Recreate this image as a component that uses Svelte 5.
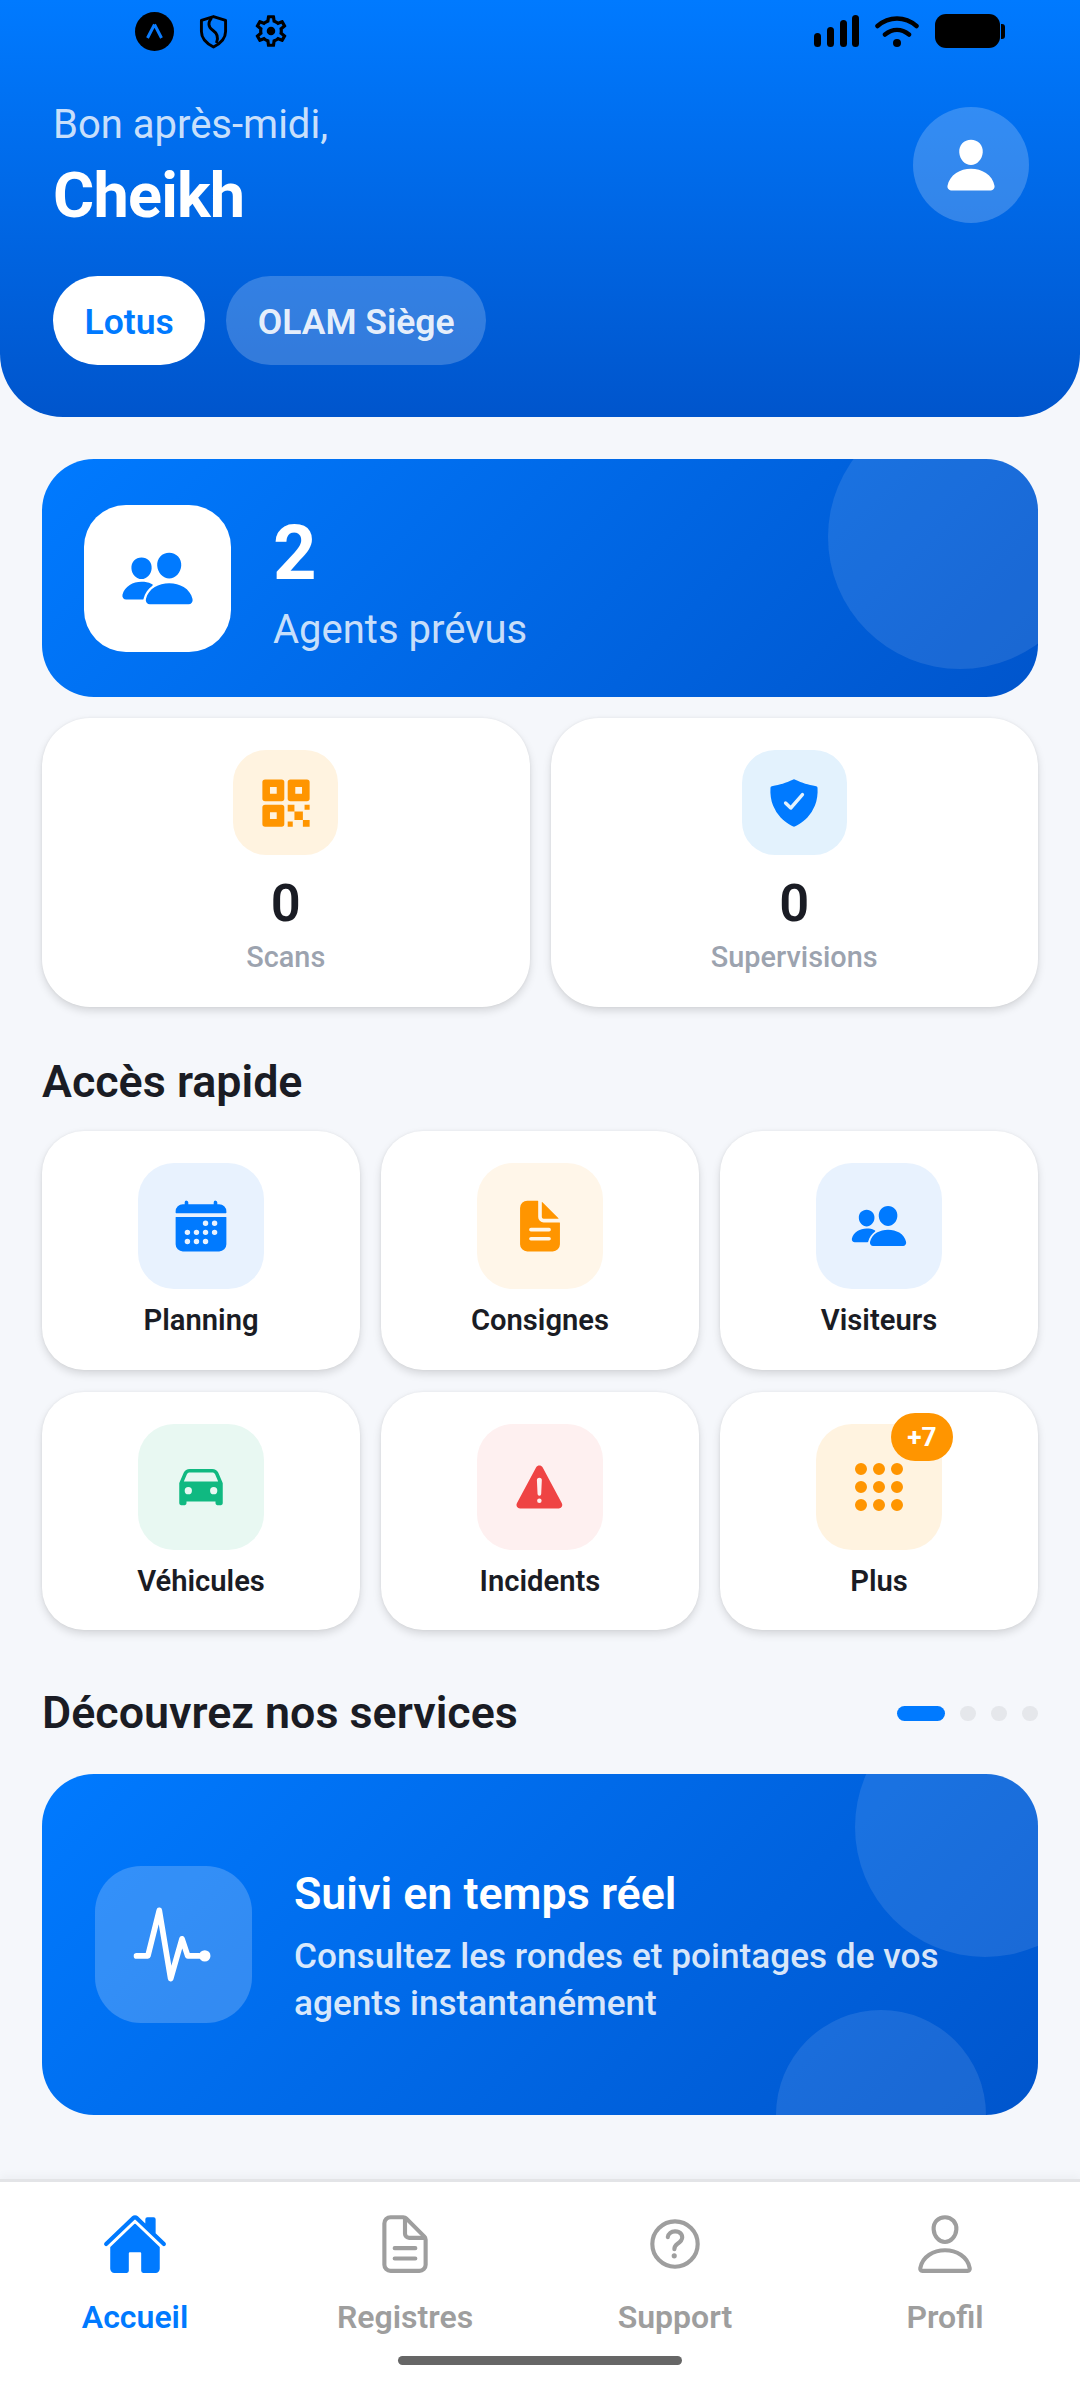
<script>
  const P = {
    person: 'M332.64 64.58C313.18 43.57 286 32 256 32c-30.16 0-57.43 11.5-76.8 32.38-19.58 21.11-29.12 49.8-26.88 80.78C156.76 206.28 203.27 256 256 256s99.16-49.71 103.67-110.82c2.27-30.7-7.33-59.33-27.03-80.6zM432 480H80a31 31 0 01-24.2-11.13c-6.5-7.77-9.12-18.38-7.18-29.11C57.06 392.94 83.4 353.61 124.8 326c36.78-24.51 83.37-38 131.2-38s94.42 13.5 131.2 38c41.4 27.6 67.74 66.93 76.18 113.75 1.94 10.73-.68 21.34-7.18 29.11A31 31 0 01432 480z',
    people: 'M336 256c-20.56 0-40.44-9.18-56-25.84-15.13-16.25-24.37-37.92-26-61-1.74-24.62 5.77-47.26 21.14-63.76S312 80 336 80c23.83 0 45.38 9.06 60.7 25.52 15.47 16.62 23 39.22 21.26 63.63-1.67 23.11-10.9 44.77-26 61C376.44 246.82 356.57 256 336 256zM467.83 432H204.18a27.71 27.71 0 01-22-10.67 30.22 30.22 0 01-5.26-25.79c8.42-33.81 29.28-61.85 60.32-81.08C264.79 297.4 299.86 288 336 288c36.85 0 71 9 98.71 26.05 31.11 19.13 52 47.33 60.38 81.55a30.27 30.27 0 01-5.32 25.78A27.68 27.68 0 01467.83 432zM147 260c-35.19 0-66.13-32.72-69-72.93-1.42-20.6 5-39.65 18-53.62 12.86-13.83 31-21.45 51-21.45s38 7.66 50.93 21.57c13.1 14.08 19.5 33.09 18 53.52-2.87 40.2-33.8 72.91-68.93 72.91zM212.66 291.45c-17.59-8.6-40.42-12.9-65.65-12.9-29.46 0-58.07 7.68-80.57 21.62-25.51 15.83-42.67 38.88-49.6 66.71a27.39 27.39 0 005.36 23.73A25.32 25.32 0 0042.46 400h111a8 8 0 007.87-6.57c.11-.63.25-1.26.41-1.88 8.48-34.06 28.35-62.84 57.71-83.82a8 8 0 00-.63-13.39c-1.57-.92-3.37-1.89-6.16-2.89z',
    calendar: 'M480 128a64 64 0 00-64-64h-16V48.45c0-8.61-6.62-16-15.23-16.43A16 16 0 00368 48v16H144V48.45c0-8.61-6.62-16-15.23-16.43A16 16 0 00112 48v16H96a64 64 0 00-64 64v12a4 4 0 004 4h440a4 4 0 004-4zM32 416a64 64 0 0064 64h320a64 64 0 0064-64V179a3 3 0 00-3-3H35a3 3 0 00-3 3zm344-208a24 24 0 11-24 24 24 24 0 0124-24zm0 80a24 24 0 11-24 24 24 24 0 0124-24zm-80-80a24 24 0 11-24 24 24 24 0 0124-24zm0 80a24 24 0 11-24 24 24 24 0 0124-24zm0 80a24 24 0 11-24 24 24 24 0 0124-24zm-80-80a24 24 0 11-24 24 24 24 0 0124-24zm0 80a24 24 0 11-24 24 24 24 0 0124-24zm-80-80a24 24 0 11-24 24 24 24 0 0124-24zm0 80a24 24 0 11-24 24 24 24 0 0124-24z',
    doc: 'M428 224H288a48 48 0 01-48-48V36a4 4 0 00-4-4h-92a64 64 0 00-64 64v320a64 64 0 0064 64h224a64 64 0 0064-64V228a4 4 0 00-4-4zm-92 160H176a16 16 0 010-32h160a16 16 0 010 32zm0-80H176a16 16 0 010-32h160a16 16 0 010 32zM419.22 188.59L275.41 44.78a2 2 0 00-3.41 1.41V176a16 16 0 0016 16h129.81a2 2 0 001.41-3.41z',
    car: 'M447.68 220.78a16 16 0 00-1-3.08l-37.78-88.16C400.19 109.17 379 96 354.89 96H157.11c-24.09 0-45.3 13.17-54 33.54L65.29 217.7A15.72 15.72 0 0064 224v176a16 16 0 0016 16h32a16 16 0 0016-16v-16h256v16a16 16 0 0016 16h32a16 16 0 0016-16V224a16.15 16.15 0 00-.32-3.22zM144 320a32 32 0 1132-32 32 32 0 01-32 32zm224 0a32 32 0 1132-32 32 32 0 01-32 32zM104.26 208l28.23-65.85C136.11 133.69 146 128 157.11 128h197.78c11.1 0 21 5.69 24.62 14.15L407.74 208z',
    warning: 'M449.07 399.08L278.64 82.58c-12.08-22.44-44.26-22.44-56.35 0L51.87 399.08A32 32 0 0080 446.25h340.89a32 32 0 0028.18-47.17zm-198.6-1.83a20 20 0 1120-20 20 20 0 01-20 20zm21.72-201.15l-5.74 122a16 16 0 01-32 0l-5.74-121.95a21.73 21.73 0 0121.5-22.69h.21a21.74 21.74 0 0121.73 22.7z',
    shield: 'M479.07 111.36a16 16 0 00-13.15-14.74c-86.5-15.52-122.61-26.74-203.33-63.2a16 16 0 00-13.18 0C168.69 69.88 132.58 81.1 46.08 96.62a16 16 0 00-13.15 14.74c-3.85 61.11 4.36 118.05 24.43 169.24A349.47 349.47 0 00129 393.11c53.47 56.73 110.24 81.37 121.07 85.73a16 16 0 0012 0c10.83-4.36 67.6-29 121.07-85.73a349.47 349.47 0 0071.5-112.51c20.07-51.19 28.28-108.13 24.43-169.24zm-131 75.11l-110.8 128a16 16 0 01-11.41 5.53h-.66a16 16 0 01-11.2-4.57l-49.2-48.2a16 16 0 1122.4-22.86l37 36.29 99.7-115.13a16 16 0 0124.2 20.94z',
    qr: 'M58 32H214a26 26 0 0126 26V214a26 26 0 01-26 26H58a26 26 0 01-26-26V58a26 26 0 0126-26zM104 104v64h64v-64zM298 32H454a26 26 0 0126 26V214a26 26 0 01-26 26H298a26 26 0 01-26-26V58a26 26 0 0126-26zM344 104v64h64v-64zM58 272H214a26 26 0 0126 26V454a26 26 0 01-26 26H58a26 26 0 01-26-26V298a26 26 0 0126-26zM104 344v64h64v-64zM272 272h64v64h-64zM336 336h80v80h-80zM416 416h64v64h-64zM432 272h48v48h-48zM272 432h48v48h-48z',
    keypad: 'M64 112a48 48 0 1096 0 48 48 0 10-96 0zM208 112a48 48 0 1096 0 48 48 0 10-96 0zM352 112a48 48 0 1096 0 48 48 0 10-96 0zM64 256a48 48 0 1096 0 48 48 0 10-96 0zM208 256a48 48 0 1096 0 48 48 0 10-96 0zM352 256a48 48 0 1096 0 48 48 0 10-96 0zM64 400a48 48 0 1096 0 48 48 0 10-96 0zM208 400a48 48 0 1096 0 48 48 0 10-96 0zM352 400a48 48 0 1096 0 48 48 0 10-96 0z',
    home: 'M261.56 101.28a8 8 0 00-11.06 0L66.4 277.15a8 8 0 00-2.47 5.79L63.9 448a32 32 0 0032 32H192a16 16 0 0016-16V328a8 8 0 018-8h80a8 8 0 018 8v136a16 16 0 0016 16h96.06a32 32 0 0032-32V282.94a8 8 0 00-2.47-5.79zM490.91 244.15l-74.8-71.56V64a16 16 0 00-16-16h-48a16 16 0 00-16 16v32l-57.92-55.38C272.77 35.14 264.71 32 256 32c-8.68 0-16.72 3.14-22.14 8.63l-212.7 203.5c-6.22 6-7 15.87-1.34 22.37A16 16 0 0043 267.56L250.5 69.28a8 8 0 0111.06 0l207.52 198.28a16 16 0 0022.59-.44c6.14-6.36 5.63-16.86-.76-22.97z'
  };
  const quick = [
    { label: 'Planning', icon: 'calendar', tone: 'blue' },
    { label: 'Consignes', icon: 'doc', tone: 'cream' },
    { label: 'Visiteurs', icon: 'people', tone: 'blue' },
    { label: 'Véhicules', icon: 'car', tone: 'green' },
    { label: 'Incidents', icon: 'warning', tone: 'red' },
    { label: 'Plus', icon: 'keypad', tone: 'orange', badge: '+7' }
  ];
</script>

{#snippet glyph(name, cls)}
  <svg class={cls} viewBox="0 0 512 512" aria-hidden="true"><path fill-rule="evenodd" d={P[name]} /></svg>
{/snippet}

<div class="page">
  <header class="hero">
    <div class="status">
      <div class="status-left">
        <svg class="s-expo" viewBox="0 0 39 39"><circle cx="19.5" cy="19.5" r="19.5" fill="#000" /><path d="M19.5 12.5 12.5 26M19.5 12.5 26.5 26" stroke="#0a7cff" stroke-width="3" fill="none" /></svg>
        <svg class="s-shield" viewBox="0 0 30 36"><path d="M15 2.5 27.5 6.5V18c0 7.5-5.5 12.5-12.5 16C8 30.500 2.500 25.500 2.500 18V6.500z" fill="none" stroke="#000" stroke-width="3" stroke-linejoin="round" /><path d="M13 4C9 9 9.500 13 14 16.500c5 3.500 6.500 8 4 13.500" fill="none" stroke="#000" stroke-width="3" /></svg>
        <svg class="s-gear" viewBox="0 0 24 24"><path fill-rule="evenodd" d="M19.43 12.98c.04-.32.07-.64.07-.98 0-.34-.03-.66-.07-.98l2.11-1.65c.19-.15.24-.42.12-.64l-2-3.46c-.09-.16-.26-.25-.44-.25-.06 0-.12.01-.17.03l-2.49 1c-.52-.4-1.08-.73-1.69-.98l-.38-2.65C14.46 2.18 14.25 2 14 2h-4c-.25 0-.46.18-.49.42l-.38 2.65c-.61.25-1.17.59-1.69.98l-2.49-1c-.06-.02-.12-.03-.18-.03-.17 0-.34.09-.43.25l-2 3.46c-.13.22-.07.49.12.64l2.11 1.65c-.04.32-.07.65-.07.98 0 .33.03.66.07.98l-2.11 1.65c-.19.15-.24.42-.12.64l2 3.46c.09.16.26.25.44.25.06 0 .12-.01.17-.03l2.49-1c.52.4 1.08.73 1.69.98l.38 2.65c.03.24.24.42.49.42h4c.25 0 .46-.18.49-.42l.38-2.65c.61-.25 1.17-.59 1.69-.98l2.49 1c.06.02.12.03.18.03.17 0 .34-.09.43-.25l2-3.46c.12-.22.07-.49-.12-.64l-2.11-1.65zm-1.98-1.71c.04.31.05.52.05.73 0 .21-.02.43-.05.73l-.14 1.13.89.7 1.08.84-.7 1.21-1.27-.51-1.04-.42-.9.68c-.43.32-.84.56-1.25.73l-1.06.43-.16 1.13-.2 1.35h-1.4l-.19-1.35-.16-1.13-1.06-.43c-.43-.18-.83-.41-1.23-.71l-.91-.7-1.06.43-1.27.51-.7-1.21 1.08-.84.89-.7-.14-1.13c-.03-.31-.05-.54-.05-.74s.02-.43.05-.73l.14-1.13-.89-.7-1.08-.84.7-1.21 1.27.51 1.04.42.9-.68c.43-.32.84-.56 1.25-.73l1.06-.43.16-1.13.2-1.35h1.39l.19 1.35.16 1.13 1.06.43c.43.18.83.41 1.23.71l.91.7 1.06-.43 1.27-.51.7 1.21-1.07.85-.89.7.14 1.13z" /><circle cx="12" cy="12" r="2.700" /></svg>
      </div>
      <div class="status-right">
        <svg class="s-signal" viewBox="0 0 46 32"><rect x="0" y="18" width="7" height="14" rx="3.500" /><rect x="13" y="12" width="7" height="20" rx="3.500" /><rect x="26" y="5" width="7" height="27" rx="3.500" /><rect x="38" y="0" width="7" height="32" rx="3.500" /></svg>
        <svg class="s-wifi" viewBox="0 0 44 32"><path d="M2.500 11C14 1 30 1 41.500 11M10 19.500c7.500-6 16.500-6 24 0" fill="none" stroke="#000" stroke-width="4.500" stroke-linecap="round" /><circle cx="22" cy="28" r="4" /></svg>
        <div class="battery"></div><div class="nub"></div>
      </div>
    </div>
    <div class="hero-row">
      <div class="hero-text">
        <div class="greet">Bon après-midi,</div>
        <div class="name">Cheikh</div>
      </div>
      <div class="avatar">{@render glyph('person', 'i-avatar')}</div>
    </div>
    <div class="chips">
      <div class="chip on">Lotus</div>
      <div class="chip">OLAM Siège</div>
    </div>
  </header>

  <main class="content">
    <section class="agents">
      <div class="deco d1"></div>
      <div class="agents-icon">{@render glyph('people', 'i-people')}</div>
      <div class="agents-text">
        <div class="agents-n">2</div>
        <div class="agents-l">Agents prévus</div>
      </div>
    </section>

    <section class="stats">
      <div class="card stat">
        <div class="stat-icon cream2">{@render glyph('qr', 'i-stat orange-f')}</div>
        <div class="stat-n">0</div>
        <div class="stat-l">Scans</div>
      </div>
      <div class="card stat">
        <div class="stat-icon blue2">{@render glyph('shield', 'i-stat blue-f')}</div>
        <div class="stat-n">0</div>
        <div class="stat-l">Supervisions</div>
      </div>
    </section>

    <h2 class="title quick-title">Accès rapide</h2>
    <section class="grid">
      {#each quick as q}
        <div class="card tile">
          <div class="tile-icon {q.tone}">
            {@render glyph(q.icon, q.icon === 'keypad' ? 'i-keypad' : 'i-tile')}
            {#if q.badge}<span class="badge">{q.badge}</span>{/if}
          </div>
          <div class="tile-l">{q.label}</div>
        </div>
      {/each}
    </section>

    <div class="services-head">
      <h2 class="title">Découvrez nos services</h2>
      <div class="dots"><span class="dot active"></span><span class="dot"></span><span class="dot"></span><span class="dot"></span></div>
    </div>

    <section class="promo">
      <div class="deco d2"></div>
      <div class="deco d3"></div>
      <div class="promo-icon">
        <svg class="i-pulse" viewBox="0 0 512 512"><path d="M48 320h64l64-256 64 384 64-224 32 96h64" fill="none" stroke="#fff" stroke-width="32" stroke-linecap="round" stroke-linejoin="round" /><circle cx="432" cy="320" r="32" fill="#fff" /></svg>
      </div>
      <div class="promo-text">
        <div class="promo-t">Suivi en temps réel</div>
        <div class="promo-d">Consultez les rondes et pointages de vos agents instantanément</div>
      </div>
    </section>
  </main>

  <nav class="tabs">
    <div class="tab-row">
      <div class="tab active">
        {@render glyph('home', 'i-tab')}
        <span>Accueil</span>
      </div>
      <div class="tab">
        <svg class="i-tab line" viewBox="0 0 512 512"><path d="M416 221.250V416a48 48 0 01-48 48H144a48 48 0 01-48-48V96a48 48 0 0148-48h98.750a32 32 0 0122.620 9.370l141.260 141.260a32 32 0 019.370 22.620z" /><path d="M256 56v120a32 32 0 0032 32h120M176 288h160M176 368h160" /></svg>
        <span>Registres</span>
      </div>
      <div class="tab">
        <svg class="i-tab line" viewBox="0 0 512 512"><path d="M256 80a176 176 0 10176 176A176 176 0 00256 80z" /><path d="M200 202.290s.84-17.500 19.570-32.570C230.680 160.770 244 158.180 256 158c10.930-.14 20.690 1.670 26.530 4.450 10 4.760 29.470 16.380 29.470 41.090 0 26-17 37.810-36.370 50.800S251 281.430 251 296" stroke-width="28" /><circle class="solid" cx="250" cy="348" r="20" /></svg>
        <span>Support</span>
      </div>
      <div class="tab">
        <svg class="i-tab line" viewBox="0 0 512 512"><path d="M344 144c-3.920 52.870-44 96-88 96s-84.150-43.120-88-96c-4-55 35-96 88-96s92 42 88 96z" /><path d="M256 304c-87 0-175.300 48-191.640 138.600C62.390 453.520 68.570 464 80 464h352c11.440 0 17.620-10.480 15.650-21.400C431.300 352 343 304 256 304z" /></svg>
        <span>Profil</span>
      </div>
    </div>
    <div class="indicator"></div>
  </nav>
</div>

<style>
  :global(body) { margin: 0; background: #f5f7fb; }
  .page {
    width: 1080px; height: 2400px; display: flex; flex-direction: column;
    background: #f5f7fb; font-family: Roboto, "Noto Sans", sans-serif; color: #1a1c24; overflow: hidden;
  }

  .hero {
    height: 417px; box-sizing: border-box; padding: 0 53px; flex: none;
    background: linear-gradient(180deg, #007aff, #0055cc);
    border-radius: 0 0 63px 63px; color: #fff;
  }
  .status { height: 62px; display: flex; justify-content: space-between; align-items: center; padding: 0 22px 0 82px; }
  .status-left, .status-right { display: flex; align-items: center; }
  .s-expo { width: 39px; height: 39px; margin-right: 25px; }
  .s-shield { width: 29px; height: 35px; margin-right: 24px; }
  .s-gear { width: 38px; height: 38px; }
  .s-signal { width: 46px; height: 32px; margin-right: 15px; }
  .s-wifi { width: 44px; height: 32px; margin-right: 16px; }
  .battery { width: 65px; height: 34px; border-radius: 11px; background: #000; }
  .nub { width: 4px; height: 15px; margin-left: 1px; border-radius: 0 3px 3px 0; background: #000; }

  .hero-row { display: flex; justify-content: space-between; align-items: center; margin: 45px -2px 0 0; height: 116px; }
  .hero-text { padding-top: 6px; }
  .greet { font-size: 40px; line-height: 46px; color: rgba(255,255,255,.8); }
  .name { font-size: 63px; line-height: 76px; font-weight: 700; letter-spacing: -.8px; margin-top: 10px; }
  .avatar { width: 116px; height: 116px; border-radius: 50%; background: rgba(255,255,255,.2); display: flex; align-items: center; justify-content: center; }
  .i-avatar { width: 58px; height: 58px; fill: #fff; }

  .chips { display: flex; gap: 21px; margin-top: 53px; }
  .chip { height: 89px; box-sizing: border-box; padding: 3px 31.500px 0; border-radius: 45px; display: flex; align-items: center; font-size: 35.500px; font-weight: 600; background: rgba(255,255,255,.2); color: rgba(255,255,255,.9); }
  .chip.on { background: #fff; color: #007aff; }

  .content { flex: 1; padding: 42px 42px 0; min-height: 0; }

  .agents {
    position: relative; overflow: hidden; height: 238px; box-sizing: border-box; padding: 0 42px;
    border-radius: 52px; display: flex; align-items: center; gap: 42px; color: #fff;
    background: linear-gradient(135deg, #007aff, #0055cc);
  }
  .deco { position: absolute; border-radius: 50%; background: rgba(255,255,255,.1); }
  .d1 { width: 264px; height: 264px; top: -54px; right: -54px; }
  .agents-icon { width: 147px; height: 147px; border-radius: 42px; background: #fff; display: flex; align-items: center; justify-content: center; flex: none; }
  .i-people { width: 75px; height: 75px; fill: #007aff; }
  .agents-text { position: relative; padding-top: 6px; }
  .agents-n { font-size: 76px; line-height: 88px; font-weight: 700; }
  .agents-l { font-size: 40px; line-height: 46px; color: rgba(255,255,255,.8); margin-top: 10px; }

  .card { background: #fff; box-shadow: 0 4px 8px rgba(0,0,0,.13), 0 0 3px rgba(0,0,0,.06); }
  .stats { display: grid; grid-template-columns: 1fr 1fr; gap: 21px; margin-top: 21px; }
  .stat { height: 289px; box-sizing: border-box; border-radius: 48px; padding-top: 32px; display: flex; flex-direction: column; align-items: center; }
  .stat-icon { width: 105px; height: 105px; border-radius: 33px; display: flex; align-items: center; justify-content: center; }
  .cream2 { background: #fff3e0; }
  .blue2 { background: #e3f2fd; }
  .i-stat { width: 54px; height: 54px; }
  :global(.orange-f) { fill: #ff9500; }
  :global(.blue-f) { fill: #007aff; }
  .stat-n { font-size: 52.500px; line-height: 62px; font-weight: 600; margin-top: 17px; }
  .stat-l { font-size: 28.875px; line-height: 36px; font-weight: 500; color: #9ca3af; margin-top: 5px; }

  .title { margin: 0; font-size: 44.800px; line-height: 60px; font-weight: 600; color: #1a1c24; }
  .quick-title { margin-top: 45px; margin-bottom: -1px; }

  .grid { display: grid; grid-template-columns: repeat(3, 1fr); column-gap: 21px; row-gap: 22px; margin-top: 20px; }
  .tile { height: 238.500px; box-sizing: border-box; border-radius: 42px; padding-top: 32px; display: flex; flex-direction: column; align-items: center; }
  .tile-icon { position: relative; width: 126px; height: 126px; border-radius: 36px; display: flex; align-items: center; justify-content: center; }
  .blue { background: #e8f2fe; }
  .blue :global(svg) { fill: #007aff; }
  .cream { background: #fff6e9; }
  .cream :global(svg) { fill: #ff9500; }
  .green { background: #e8f8f2; }
  .green :global(svg) { fill: #10b981; }
  .red { background: #fef0f0; }
  .red :global(svg) { fill: #ef4444; }
  .orange { background: #fff3e0; }
  .orange :global(svg) { fill: #ff9500; }
  .i-tile { width: 58px; height: 58px; }
  .i-keypad { width: 64px; height: 64px; }
  .badge { position: absolute; top: -11px; right: -11px; width: 62px; height: 48px; border-radius: 24px; background: #ff9500; color: #fff; font-size: 26.250px; font-weight: 700; display: flex; align-items: center; justify-content: center; }
  .tile-l { font-size: 29.200px; line-height: 36px; font-weight: 600; margin-top: 13px; }

  .services-head { display: flex; justify-content: space-between; align-items: center; margin-top: 53px; }
  .dots { display: flex; gap: 15px; align-items: center; }
  .dot { width: 16px; height: 15px; border-radius: 8px; background: #e5e7eb; }
  .dot.active { width: 48px; background: #007aff; }

  .promo {
    position: relative; overflow: hidden; height: 341px; margin-top: 31px; box-sizing: border-box; padding: 0 53px;
    border-radius: 52px; display: flex; align-items: center; gap: 42px; color: #fff;
    background: linear-gradient(135deg, #007aff, #0055cc);
  }
  .d2 { width: 260px; height: 260px; top: -77px; right: -77px; }
  .d3 { width: 210px; height: 210px; bottom: -105px; right: 52px; }
  .promo-icon { position: relative; width: 157px; height: 157px; border-radius: 46px; background: rgba(255,255,255,.2); display: flex; align-items: center; justify-content: center; flex: none; }
  .i-pulse { width: 91px; height: 91px; }
  .promo-text { position: relative; flex: 1; padding-top: 5px; }
  .promo-t { font-size: 44.800px; line-height: 54px; font-weight: 600; }
  .promo-d { font-size: 35.200px; line-height: 47px; font-weight: 500; color: rgba(255,255,255,.85); margin-top: 12px; }

  .tabs { height: 221px; flex: none; box-sizing: border-box; background: #fff; border-top: 3px solid #e3e4e7; box-shadow: 0 -4px 8px rgba(0,0,0,.03); display: flex; flex-direction: column; align-items: center; position: relative; }
  .tab-row { display: grid; grid-template-columns: repeat(4, 270px); width: 1080px; padding-top: 29px; }
  .tab { display: flex; flex-direction: column; align-items: center; font-size: 32px; line-height: 38px; font-weight: 600; color: #9e9e9e; fill: #9e9e9e; }
  .tab span { margin-top: 21px; }
  .tab.active { color: #007aff; fill: #007aff; }
  .i-tab { width: 66px; height: 66px; }
  .line path { fill: none; stroke: #9e9e9e; stroke-width: 32px; stroke-linecap: round; stroke-linejoin: round; }
  .line .solid { fill: #9e9e9e; }
  .indicator { width: 284px; height: 9px; border-radius: 5px; background: #666; margin-top: 20px; }
  .s-expo, .s-shield, .s-gear, .s-signal, .s-wifi { fill: #000; }
</style>
